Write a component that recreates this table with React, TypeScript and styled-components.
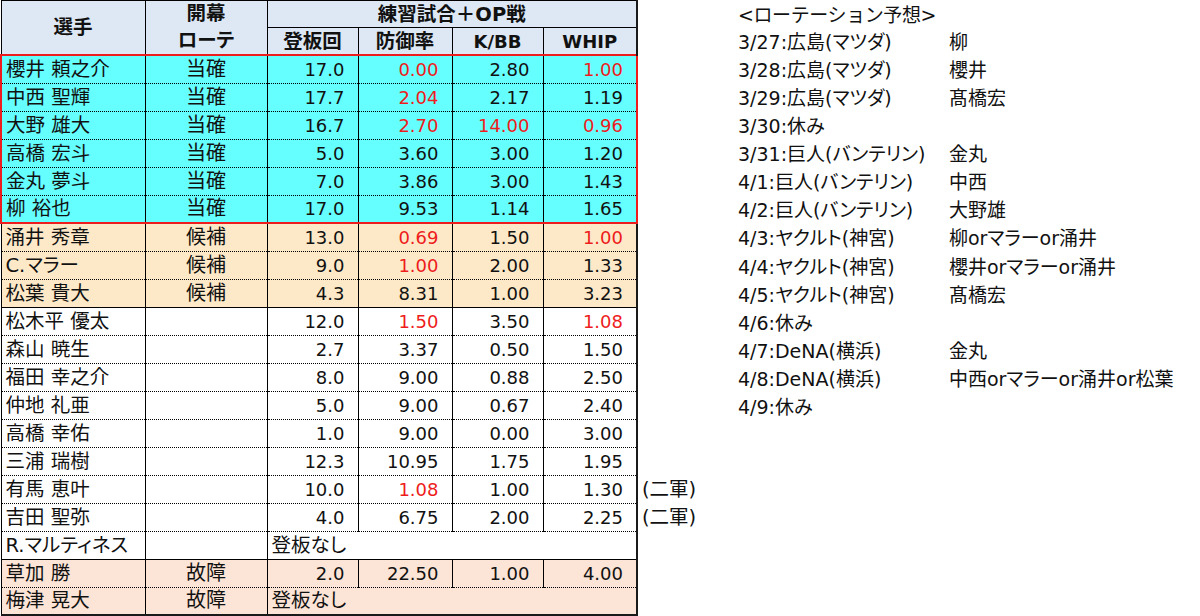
import React from 'react';
import styled, { createGlobalStyle, css } from 'styled-components';

type Tone = 'cyan' | 'cream' | 'pink' | 'plain';

interface Stat {
    v: string;
    red?: boolean;
}

interface PitcherRow {
    name: string;
    role?: string;
    stats?: Stat[];
    tone: Tone;
    note?: string;
    ruleTop?: boolean;
}

const toneBg: Record<Tone, string> = {
    cyan: '#66ffff',
    cream: '#fde9c8',
    pink: '#fce4d6',
    plain: '#ffffff',
};

const s = (v: string, red = false): Stat => ({ v, red });

const rows: PitcherRow[] = [
    { name: '櫻井 頼之介', role: '当確', tone: 'cyan', stats: [s('17.0'), s('0.00', true), s('2.80'), s('1.00', true)] },
    { name: '中西 聖輝', role: '当確', tone: 'cyan', stats: [s('17.7'), s('2.04', true), s('2.17'), s('1.19')] },
    { name: '大野 雄大', role: '当確', tone: 'cyan', stats: [s('16.7'), s('2.70', true), s('14.00', true), s('0.96', true)] },
    { name: '高橋 宏斗', role: '当確', tone: 'cyan', stats: [s('5.0'), s('3.60'), s('3.00'), s('1.20')] },
    { name: '金丸 夢斗', role: '当確', tone: 'cyan', stats: [s('7.0'), s('3.86'), s('3.00'), s('1.43')] },
    { name: '柳 裕也', role: '当確', tone: 'cyan', stats: [s('17.0'), s('9.53'), s('1.14'), s('1.65')] },
    { name: '涌井 秀章', role: '候補', tone: 'cream', stats: [s('13.0'), s('0.69', true), s('1.50'), s('1.00', true)] },
    { name: 'C.マラー', role: '候補', tone: 'cream', stats: [s('9.0'), s('1.00', true), s('2.00'), s('1.33')] },
    { name: '松葉 貴大', role: '候補', tone: 'cream', stats: [s('4.3'), s('8.31'), s('1.00'), s('3.23')] },
    { name: '松木平 優太', tone: 'plain', ruleTop: true, stats: [s('12.0'), s('1.50', true), s('3.50'), s('1.08', true)] },
    { name: '森山 暁生', tone: 'plain', stats: [s('2.7'), s('3.37'), s('0.50'), s('1.50')] },
    { name: '福田 幸之介', tone: 'plain', stats: [s('8.0'), s('9.00'), s('0.88'), s('2.50')] },
    { name: '仲地 礼亜', tone: 'plain', stats: [s('5.0'), s('9.00'), s('0.67'), s('2.40')] },
    { name: '高橋 幸佑', tone: 'plain', stats: [s('1.0'), s('9.00'), s('0.00'), s('3.00')] },
    { name: '三浦 瑞樹', tone: 'plain', stats: [s('12.3'), s('10.95'), s('1.75'), s('1.95')] },
    { name: '有馬 恵叶', tone: 'plain', note: '(二軍)', stats: [s('10.0'), s('1.08', true), s('1.00'), s('1.30')] },
    { name: '吉田 聖弥', tone: 'plain', note: '(二軍)', stats: [s('4.0'), s('6.75'), s('2.00'), s('2.25')] },
    { name: 'R.マルティネス', tone: 'plain' },
    { name: '草加 勝', role: '故障', tone: 'pink', ruleTop: true, stats: [s('2.0'), s('22.50'), s('1.00'), s('4.00')] },
    { name: '梅津 晃大', role: '故障', tone: 'pink' },
];

const rotation: [string, string][] = [
    ['3/27:広島(マツダ)', '柳'],
    ['3/28:広島(マツダ)', '櫻井'],
    ['3/29:広島(マツダ)', '髙橋宏'],
    ['3/30:休み', ''],
    ['3/31:巨人(バンテリン)', '金丸'],
    ['4/1:巨人(バンテリン)', '中西'],
    ['4/2:巨人(バンテリン)', '大野雄'],
    ['4/3:ヤクルト(神宮)', '柳orマラーor涌井'],
    ['4/4:ヤクルト(神宮)', '櫻井orマラーor涌井'],
    ['4/5:ヤクルト(神宮)', '髙橋宏'],
    ['4/6:休み', ''],
    ['4/7:DeNA(横浜)', '金丸'],
    ['4/8:DeNA(横浜)', '中西orマラーor涌井or松葉'],
    ['4/9:休み', ''],
];

const RED = '#ee1c1c';
const INK = '#111';

const GlobalStyle = createGlobalStyle`
    html, body {
        margin: 0;
        padding: 0;
        background: #ffffff;
    }
    body {
        font-family: "DejaVu Sans", "Noto Sans CJK JP", sans-serif;
        color: ${INK};
    }
`;

const Page = styled.div`
    display: flex;
    align-items: flex-start;
    width: 1200px;
    height: 616px;
    overflow: hidden;
`;

const Sheet = styled.table`
    border-collapse: collapse;
    table-layout: fixed;
    width: 737px;
    font-size: 19.5px;
    font-feature-settings: "palt";
`;

const HeadRow = styled.tr`
    height: 27px;
`;

const HeadCell = styled.th<{ $split?: boolean; $edge?: boolean }>`
    padding: 0;
    background: #dde8f4;
    border: 1px solid #000;
    font-weight: 700;
    font-size: 19.5px;
    line-height: 25px;
    text-align: center;
    vertical-align: middle;
    white-space: nowrap;
    overflow: hidden;
    ${({ $split }) => $split && css`border-bottom: 1px solid #000;`}
    ${({ $edge }) => $edge && css`border-right: 2px solid #1a1a1a;`}
`;

const StackedLabel = styled.div`
    display: flex;
    flex-direction: column;
    line-height: 27px;
    margin-top: -1px;
`;

const LatinHead = styled.span`
    font-size: 18px;
`;

const BodyRow = styled.tr<{ $tone: Tone }>`
    height: 28px;
    background: ${({ $tone }) => toneBg[$tone]};
`;

interface CellFrame {
    $first?: boolean;
    $last?: boolean;
    $boxTop?: boolean;
    $boxBottom?: boolean;
    $boxSide?: boolean;
    $ruleTop?: boolean;
    $bottomEdge?: boolean;
}

const frame = css<CellFrame>`
    border-left: 1px solid #000;
    border-right: 1px solid #000;
    border-top: 1px dotted #000;
    border-bottom: 1px dotted #000;
    ${({ $ruleTop }) => $ruleTop && css`border-top: 1px solid #000;`}
    ${({ $last }) => $last && css`border-right: 2px solid #1a1a1a;`}
    ${({ $bottomEdge }) => $bottomEdge && css`border-bottom: 2px solid #1a1a1a;`}
    ${({ $boxTop }) => $boxTop && css`border-top: 2px solid ${RED};`}
    ${({ $boxBottom }) => $boxBottom && css`border-bottom: 2px solid ${RED};`}
    ${({ $boxSide, $first }) => $boxSide && $first && css`border-left: 2px solid ${RED};`}
    ${({ $boxSide, $last }) => $boxSide && $last && css`border-right: 2px solid ${RED};`}
`;

const NameCell = styled.td<CellFrame>`
    ${frame}
    padding: 0 0 0 4px;
    text-align: left;
    vertical-align: middle;
    white-space: nowrap;
    line-height: 25px;
`;

const RoleCell = styled.td<CellFrame>`
    ${frame}
    padding: 0;
    text-align: center;
    vertical-align: middle;
    line-height: 25px;
    font-size: 20px;
`;

const NumCell = styled.td<CellFrame & { $red?: boolean }>`
    ${frame}
    padding: 0 13px 0 0;
    text-align: right;
    vertical-align: middle;
    line-height: 25px;
    font-size: 18px;
    color: ${({ $red }) => ($red ? RED : INK)};
`;

const NoStatCell = styled.td<CellFrame>`
    ${frame}
    padding: 0 0 0 4px;
    text-align: left;
    vertical-align: middle;
    line-height: 25px;
`;

const NoteCell = styled.td`
    padding: 0 0 0 4px;
    border: none;
    background: #ffffff;
    text-align: left;
    vertical-align: middle;
    white-space: nowrap;
    line-height: 25px;
`;

const Rotation = styled.div`
    display: grid;
    grid-template-columns: 211px auto;
    grid-template-rows: 27px 27px;
    grid-auto-rows: 28.15px;
    align-items: center;
    font-size: 19px;
    white-space: nowrap;
`;

const RotationTitle = styled.div`
    grid-column: 1 / span 2;
    letter-spacing: -0.4px;
`;

const RotationDay = styled.div`
    font-feature-settings: "palt";
`;

const RotationPick = styled.div`
    font-feature-settings: "palt";
`;

const App: React.FC = () => {
    const lastIndex = rows.length - 1;

    return (
        <>
            <GlobalStyle />
            <Page>
                <Sheet>
                    <colgroup>
                        <col style={{ width: 144 }} />
                        <col style={{ width: 122 }} />
                        <col style={{ width: 91 }} />
                        <col style={{ width: 94 }} />
                        <col style={{ width: 91 }} />
                        <col style={{ width: 94 }} />
                        <col style={{ width: 101 }} />
                    </colgroup>
                    <thead>
                        <HeadRow>
                            <HeadCell rowSpan={2}>選手</HeadCell>
                            <HeadCell rowSpan={2}>
                                <StackedLabel>
                                    <span>開幕</span>
                                    <span>ローテ</span>
                                </StackedLabel>
                            </HeadCell>
                            <HeadCell colSpan={4} $split $edge>
                                練習試合＋OP戦
                            </HeadCell>
                            <NoteCell rowSpan={2} />
                        </HeadRow>
                        <HeadRow>
                            <HeadCell>登板回</HeadCell>
                            <HeadCell>防御率</HeadCell>
                            <HeadCell>
                                <LatinHead>K/BB</LatinHead>
                            </HeadCell>
                            <HeadCell $edge>
                                <LatinHead>WHIP</LatinHead>
                            </HeadCell>
                        </HeadRow>
                    </thead>
                    <tbody>
                        {rows.map((row, i) => {
                            const boxed = row.tone === 'cyan';
                            const edge = {
                                $boxTop: boxed && i === 0,
                                $boxBottom: boxed && rows[i + 1]?.tone !== 'cyan',
                                $boxSide: boxed,
                                $ruleTop: row.ruleTop,
                                $bottomEdge: i === lastIndex,
                            };
                            return (
                                <BodyRow key={row.name} $tone={row.tone}>
                                    <NameCell {...edge} $first>
                                        {row.name}
                                    </NameCell>
                                    <RoleCell {...edge}>{row.role ?? ''}</RoleCell>
                                    {row.stats ? (
                                        row.stats.map((st, k) => (
                                            <NumCell key={k} {...edge} $red={st.red} $last={k === 3}>
                                                {st.v}
                                            </NumCell>
                                        ))
                                    ) : (
                                        <NoStatCell {...edge} colSpan={4} $last>
                                            登板なし
                                        </NoStatCell>
                                    )}
                                    <NoteCell>{row.note ?? ''}</NoteCell>
                                </BodyRow>
                            );
                        })}
                    </tbody>
                </Sheet>
                <Rotation>
                    <RotationTitle>&lt;ローテーション予想&gt;</RotationTitle>
                    {rotation.map(([day, pick]) => (
                        <React.Fragment key={day}>
                            <RotationDay>{day}</RotationDay>
                            <RotationPick>{pick}</RotationPick>
                        </React.Fragment>
                    ))}
                </Rotation>
            </Page>
        </>
    );
};

export default App;
